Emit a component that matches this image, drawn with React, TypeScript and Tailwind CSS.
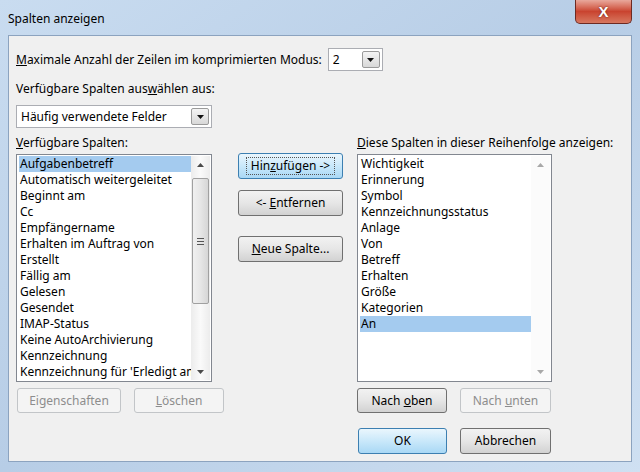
// Dialog "Spalten anzeigen" im Stil von Windows 7
const font = "font-['Segoe_UI','Noto_Sans',sans-serif]";

const leftItems = [
  "Aufgabenbetreff",
  "Automatisch weitergeleitet",
  "Beginnt am",
  "Cc",
  "Empfängername",
  "Erhalten im Auftrag von",
  "Erstellt",
  "Fällig am",
  "Gelesen",
  "Gesendet",
  "IMAP-Status",
  "Keine AutoArchivierung",
  "Kennzeichnung",
  "Kennzeichnung für 'Erledigt am'",
];

const rightItems = [
  "Wichtigkeit",
  "Erinnerung",
  "Symbol",
  "Kennzeichnungsstatus",
  "Anlage",
  "Von",
  "Betreff",
  "Erhalten",
  "Größe",
  "Kategorien",
  "An",
];

function Arrow({ up, light }: { up?: boolean; light?: boolean }) {
  return (
    <svg width="7" height="4" viewBox="0 0 7 4">
      <polygon
        points={up ? "0,4 7,4 3.5,0" : "0,0 7,0 3.5,4"}
        fill={light ? "#a8a8a8" : "#4a4a4a"}
      />
    </svg>
  );
}

function Combo({ value, w }: { value: string; w: string }) {
  return (
    <div className={`${w} h-[23px] bg-white border border-[#abadb3] flex items-center pl-[4px] pr-[2px]`}>
      <span className="flex-1 text-[12px] text-black truncate">{value}</span>
      <div className="w-[18px] h-[17px] border border-[#9a9a9a] rounded-[2px] bg-gradient-to-b from-[#f4f4f4] to-[#d8d8d8] flex items-center justify-center">
        <svg width="7" height="4" viewBox="0 0 7 4">
          <polygon points="0,0 7,0 3.5,4" fill="#111" />
        </svg>
      </div>
    </div>
  );
}

function Btn({
  children,
  w,
  h = "h-[25px]",
  disabled,
  blue,
  focus,
}: {
  children: React.ReactNode;
  w: string;
  h?: string;
  disabled?: boolean;
  blue?: boolean;
  focus?: boolean;
}) {
  let cls =
    "border-[#707070] bg-gradient-to-b from-[#f2f2f2] via-[#e6e6e6] to-[#d2d2d2] text-black";
  if (disabled) cls = "border-[#c2c5c8] bg-[#f4f4f4] text-[#8d8d8d]";
  if (blue)
    cls =
      "border-[#3c7fb1] bg-gradient-to-b from-[#eaf6fd] via-[#c9e8fa] to-[#a9d8f5] text-black";
  return (
    <div
      className={`${w} ${h} shrink-0 border rounded-[3px] flex items-center justify-center text-[12px] ${cls}`}
    >
      <div
        className={`px-[4px] leading-[16px] ${
          focus ? "border border-dotted border-[#555]" : "border border-transparent"
        }`}
      >
        {children}
      </div>
    </div>
  );
}

export default function App() {
  return (
    <div
      className={`${font} w-[640px] h-[472px] bg-gradient-to-br from-[#c9dcf0] via-[#b7cde6] to-[#cfe0f2] flex flex-col overflow-hidden`}
    >
      {/* Titelleiste */}
      <div className="h-[35px] flex items-start">
        <div className="pl-[8px] pt-[10px] text-[12px] text-black leading-[18px]">
          Spalten anzeigen
        </div>
        <div className="ml-auto mr-[8px] w-[57px] h-[24px] rounded-b-[5px] border border-t-0 border-[#6d2a22] bg-gradient-to-b from-[#e8a89c] via-[#c9432f] to-[#d7775f] flex items-center justify-center">
          <span className="text-white font-bold text-[15px] leading-none font-['Liberation_Sans',sans-serif] [text-shadow:0_0_2px_#5a1a10]">
            X
          </span>
        </div>
      </div>

      {/* Inhalt */}
      <div className="mx-[8px] h-[427px] border border-[#8ca3bf] bg-[#f0f0f0] px-[7px] pt-[12px] text-[12px] text-black">
        <div className="flex items-center h-[23px]">
          <span>
            <u>M</u>aximale Anzahl der Zeilen im komprimierten Modus:
          </span>
          <div className="ml-[6px]">
            <Combo value="2" w="w-[55px]" />
          </div>
        </div>

        <div className="mt-[9px] leading-[17px]">
          Verfügbare Spalten aus<u>w</u>ählen aus:
        </div>
        <div className="mt-[8px]">
          <Combo value="Häufig verwendete Felder" w="w-[196px]" />
        </div>

        <div className="flex mt-[6px]">
          {/* linke Spalte */}
          <div className="w-[196px] shrink-0">
            <div className="leading-[17px]">
              <u>V</u>erfügbare Spalten:
            </div>
            <div className="mt-[3px] h-[228px] border border-[#828790] bg-white flex">
              <div className="flex-1 min-w-0 pt-[1px] pl-[2px] overflow-hidden">
                {leftItems.map((t, i) => (
                  <div
                    key={t}
                    className={`h-[16px] leading-[16px] pl-[1px] whitespace-nowrap overflow-hidden ${
                      i === 0 ? "bg-[#a4cbef]" : ""
                    }`}
                  >
                    {t}
                  </div>
                ))}
              </div>
              <div className="w-[19px] shrink-0 my-[1px] mr-[1px] flex flex-col items-center bg-gradient-to-r from-[#ececec] via-[#fafafa] to-[#ececec]">
                <div className="h-[17px] flex items-center justify-center">
                  <Arrow up />
                </div>
                <div className="h-[5px]" />
                <div className="w-[17px] h-[126px] border border-[#a0a0a0] rounded-[2px] bg-gradient-to-r from-[#f0f0f0] via-[#e6e6e6] to-[#d6d6d6] flex items-center justify-center">
                  <div className="flex flex-col gap-[2px]">
                    <div className="w-[7px] h-px bg-[#555]" />
                    <div className="w-[7px] h-px bg-[#555]" />
                    <div className="w-[7px] h-px bg-[#555]" />
                  </div>
                </div>
                <div className="flex-1" />
                <div className="h-[17px] flex items-center justify-center">
                  <Arrow />
                </div>
              </div>
            </div>
            <div className="flex mt-[6px] pl-px gap-[13px]">
              <Btn w="w-[104px]" disabled>
                Eigenschaften
              </Btn>
              <Btn w="w-[90px]" disabled>
                <u>L</u>öschen
              </Btn>
            </div>
          </div>

          {/* mittlere Knöpfe */}
          <div className="w-[105px] ml-[26px] pt-[19px] flex flex-col">
            <Btn w="w-[105px]" h="h-[26px]" blue focus>
              Hin<u>z</u>ufügen -&gt;
            </Btn>
            <div className="h-[11px]" />
            <Btn w="w-[105px]" h="h-[26px]">
              &lt;- <u>E</u>ntfernen
            </Btn>
            <div className="h-[20px]" />
            <Btn w="w-[105px]" h="h-[26px]">
              <u>N</u>eue Spalte...
            </Btn>
          </div>

          {/* rechte Spalte */}
          <div className="w-[195px] ml-[14px]">
            <div className="leading-[17px] whitespace-nowrap">
              <u>D</u>iese Spalten in dieser Reihenfolge anzeigen:
            </div>
            <div className="mt-[3px] h-[228px] border border-[#828790] bg-white flex">
              <div className="flex-1 min-w-0 pt-[1px] pl-[2px] overflow-hidden">
                {rightItems.map((t, i) => (
                  <div
                    key={t}
                    className={`h-[16px] leading-[16px] pl-[1px] whitespace-nowrap ${
                      i === rightItems.length - 1 ? "bg-[#a4cbef]" : ""
                    }`}
                  >
                    {t}
                  </div>
                ))}
              </div>
              <div className="w-[19px] shrink-0 my-[1px] mr-[1px] flex flex-col items-center bg-[#fbfbfb]">
                <div className="h-[17px] flex items-center justify-center">
                  <Arrow up light />
                </div>
                <div className="flex-1" />
                <div className="h-[17px] flex items-center justify-center">
                  <Arrow light />
                </div>
              </div>
            </div>
            <div className="flex mt-[6px] gap-[13px]">
              <Btn w="w-[90px]">
                Nach <u>o</u>ben
              </Btn>
              <Btn w="w-[91px]" disabled>
                Nach <u>u</u>nten
              </Btn>
            </div>
            <div className="flex mt-[15px] pl-px gap-[13px]">
              <Btn w="w-[89px]" h="h-[26px]" blue>
                OK
              </Btn>
              <Btn w="w-[91px]" h="h-[26px]">
                Abbrechen
              </Btn>
            </div>
          </div>
        </div>
      </div>
    </div>
  );
}
